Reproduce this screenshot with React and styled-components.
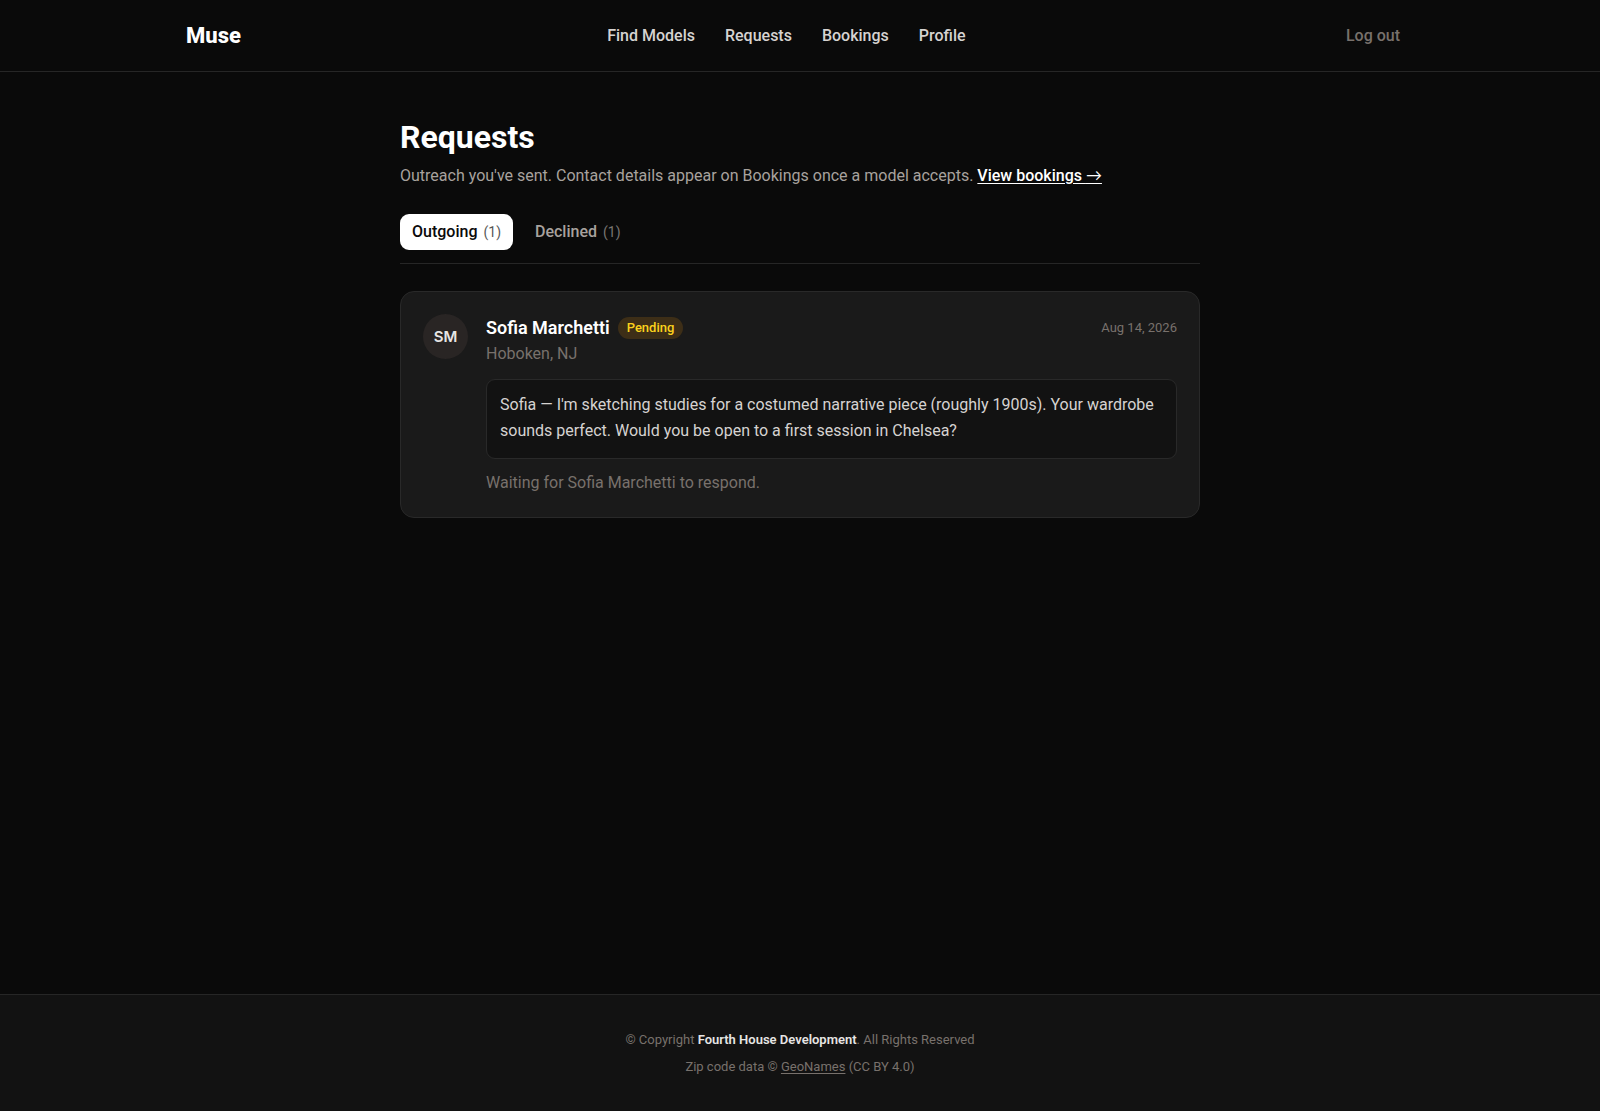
import { useState } from "react";
import styled, { createGlobalStyle } from "styled-components";

const GlobalStyle = createGlobalStyle`
  * {
    box-sizing: border-box;
  }
  body {
    margin: 0;
    background: #0a0a0a;
    color: #fff;
    font-family: Roboto, Lato, "Liberation Sans", sans-serif;
    font-size: 16px;
    line-height: 24px;
  }
  h1, h2, p {
    margin: 0;
  }
  button {
    font-family: inherit;
    border: none;
    cursor: pointer;
  }
`;

const Page = styled.div`
  min-height: 100vh;
  display: flex;
  flex-direction: column;
`;

const Header = styled.header`
  border-bottom: 1px solid #262626;
`;

const HeaderInner = styled.div`
  max-width: 1276px;
  min-height: 71px;
  margin: 0 auto;
  padding: 0 24px;
  display: flex;
  align-items: center;
  justify-content: space-between;
`;

const Logo = styled.a`
  color: #fff;
  font-size: 22px;
  font-weight: 800;
  line-height: 32px;
  text-decoration: none;
`;

const Nav = styled.nav`
  display: flex;
  gap: 30px;
`;

const NavLink = styled.a`
  color: #d6d3d1;
  font-weight: 500;
  text-decoration: none;
  &:hover {
    color: #fff;
  }
`;

const LogoutButton = styled.button`
  padding: 8px 14px;
  background: transparent;
  color: #78716c;
  font-size: 16px;
  font-weight: 500;
  line-height: 24px;
`;

const Main = styled.main`
  flex: 1;
  width: 100%;
  max-width: 848px;
  margin: 0 auto;
  padding: 44px 24px;
`;

const Title = styled.h1`
  font-size: 32px;
  font-weight: 700;
  line-height: 42px;
`;

const Subtitle = styled.p`
  margin-top: 6px;
  color: #a8a29e;
`;

const BookingsLink = styled.a`
  color: #fff;
  font-weight: 500;
  text-decoration: underline;
  text-underline-offset: 2px;
`;

const Arrow = styled.span`
  font-weight: 400;
`;

const Tabs = styled.div`
  margin: 26px 0 27px;
  padding-bottom: 13px;
  display: flex;
  gap: 10px;
  border-bottom: 1px solid #262626;
`;

const Tab = styled.button`
  padding: 6px 12px;
  border-radius: 9px;
  background: ${({ $active }) => ($active ? "#fff" : "transparent")};
  color: ${({ $active }) => ($active ? "#0a0a0a" : "#a8a29e")};
  font-size: 16px;
  font-weight: 500;
  line-height: 24px;
`;

const TabCount = styled.span`
  margin-left: 6px;
  font-size: 14px;
  font-weight: 400;
  opacity: 0.7;
`;

const Card = styled.article`
  display: flex;
  gap: 18px;
  padding: 22px;
  border: 1px solid #292929;
  border-radius: 14px;
  background: #1a1a1a;
`;

const Avatar = styled.div`
  flex: none;
  display: flex;
  align-items: center;
  justify-content: center;
  width: 45px;
  height: 45px;
  border-radius: 50%;
  background: #292524;
  color: #e7e5e4;
  font-family: Inter, sans-serif;
  font-size: 15px;
  font-weight: 600;
`;

const CardBody = styled.div`
  flex: 1;
  min-width: 0;
`;

const CardTop = styled.div`
  display: flex;
  align-items: center;
  gap: 8px;
`;

const Name = styled.h2`
  font-size: 18px;
  font-weight: 600;
  line-height: 28px;
`;

const Badge = styled.span`
  padding: 1px 9px;
  border-radius: 999px;
  background: #3d2e17;
  color: #fcd21c;
  font-size: 13px;
  font-weight: 500;
  line-height: 20px;
`;

const DateText = styled.time`
  margin-left: auto;
  color: #78716c;
  font-size: 13px;
`;

const MutedText = styled.p`
  color: #78716c;
`;

const Message = styled.p`
  margin: 13px 0 12px;
  padding: 12px 13px 14px;
  border: 1px solid #292929;
  border-radius: 9px;
  background: #121212;
  color: #d6d3d1;
  line-height: 26px;
`;

const Footer = styled.footer`
  padding: 31px 24px;
  border-top: 1px solid #262626;
  background: #121212;
  color: #78716c;
  font-size: 13px;
  line-height: 27px;
  text-align: center;
  strong {
    color: #e7e5e4;
    font-weight: 600;
  }
  a {
    color: inherit;
    text-underline-offset: 2px;
  }
`;

const navItems = ["Find Models", "Requests", "Bookings", "Profile"];

const tabItems = [
  { id: "outgoing", label: "Outgoing", count: 1 },
  { id: "declined", label: "Declined", count: 1 },
];

const RequestCard = ({ initials, name, location, status, date, message }) => (
  <Card>
    <Avatar>{initials}</Avatar>
    <CardBody>
      <CardTop>
        <Name>{name}</Name>
        <Badge>{status}</Badge>
        <DateText>{date}</DateText>
      </CardTop>
      <MutedText>{location}</MutedText>
      <Message>{message}</Message>
      <MutedText>Waiting for {name} to respond.</MutedText>
    </CardBody>
  </Card>
);

const App = () => {
  const [tab, setTab] = useState("outgoing");

  return (
    <Page>
      <GlobalStyle />
      <Header>
        <HeaderInner>
          <Logo href="#">Muse</Logo>
          <Nav>
            {navItems.map((item) => (
              <NavLink key={item} href="#">
                {item}
              </NavLink>
            ))}
          </Nav>
          <LogoutButton type="button">Log out</LogoutButton>
        </HeaderInner>
      </Header>
      <Main>
        <Title>Requests</Title>
        <Subtitle>
          Outreach you've sent. Contact details appear on Bookings once a model
          accepts.{" "}
          <BookingsLink href="#">
            View bookings <Arrow>→</Arrow>
          </BookingsLink>
        </Subtitle>
        <Tabs>
          {tabItems.map(({ id, label, count }) => (
            <Tab
              key={id}
              type="button"
              $active={tab === id}
              onClick={() => setTab(id)}
            >
              {label}
              <TabCount>({count})</TabCount>
            </Tab>
          ))}
        </Tabs>
        <RequestCard
          initials="SM"
          name="Sofia Marchetti"
          location="Hoboken, NJ"
          status="Pending"
          date="Aug 14, 2026"
          message="Sofia — I'm sketching studies for a costumed narrative piece (roughly 1900s). Your wardrobe sounds perfect. Would you be open to a first session in Chelsea?"
        />
      </Main>
      <Footer>
        <p>
          © Copyright <strong>Fourth House Development</strong>. All Rights
          Reserved
        </p>
        <p>
          Zip code data © <a href="#">GeoNames</a> (CC BY 4.0)
        </p>
      </Footer>
    </Page>
  );
};

export default App;
